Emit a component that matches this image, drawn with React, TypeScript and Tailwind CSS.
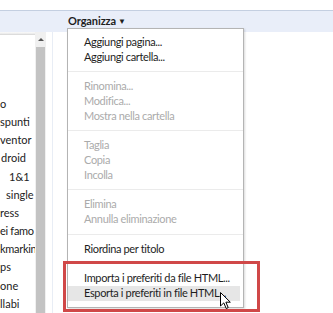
import React from 'react'

type Item = { label: string; disabled?: boolean; hover?: boolean } | 'sep'

const menu: Item[] = [
  { label: 'Aggiungi pagina...' },
  { label: 'Aggiungi cartella...' },
  'sep',
  { label: 'Rinomina...', disabled: true },
  { label: 'Modifica...', disabled: true },
  { label: 'Mostra nella cartella', disabled: true },
  'sep',
  { label: 'Taglia', disabled: true },
  { label: 'Copia', disabled: true },
  { label: 'Incolla', disabled: true },
  'sep',
  { label: 'Elimina', disabled: true },
  { label: 'Annulla eliminazione', disabled: true },
  'sep',
  { label: 'Riordina per titolo' },
  'sep',
  { label: 'Importa i preferiti da file HTML...' },
  { label: 'Esporta i preferiti in file HTML...', hover: true },
]

// visible (clipped) tails of the bookmark tree on the left
const tree: { text: string; cls: string }[] = [
  { text: 'o', cls: 'pl-0' },
  { text: 'spunti', cls: 'pl-0' },
  { text: 'ventor', cls: 'pl-0' },
  { text: 'droid', cls: 'pl-[1px]' },
  { text: '1&1', cls: 'pl-[9px]' },
  { text: 'single', cls: 'pl-[6px]' },
  { text: 'ress', cls: 'pl-0' },
  { text: 'ei famo', cls: 'pl-0 tracking-[-0.3px]' },
  { text: 'kmarkin', cls: 'pl-0 tracking-[-0.3px]' },
  { text: 'ps', cls: 'pl-0' },
  { text: 'one', cls: 'pl-0' },
  { text: 'llabi', cls: 'pl-0' },
]

function Cursor() {
  return (
    <svg width="12" height="18" viewBox="0 0 12 18" className="absolute left-[220px] top-[292px]">
      <path
        d="M0.5 0.5 L0.5 14 L3.8 10.9 L6.2 16.5 L8.2 15.6 L5.9 10.2 L10.3 10.2 Z"
        fill="#fff"
        stroke="#000"
        strokeWidth="1"
        strokeLinejoin="round"
      />
    </svg>
  )
}

export default function App() {
  return (
    <div className="relative w-[333px] h-[313px] overflow-hidden bg-white font-['Lato',_'Noto_Sans',_sans-serif] text-[#222]">
      {/* top band + toolbar */}
      <div className="h-[11px] bg-white border-b border-[#c4cfe1]" />
      <div className="h-[21px] bg-[#e9eef9] flex items-center pl-[68px] pb-[1px]">
        <span className="text-[11px] font-bold text-[#1e1e1e] tracking-[-0.1px]">Organizza</span>
        <span className="ml-[2px] text-[8px] text-[#1e1e1e]">▼</span>
      </div>

      {/* body */}
      <div className="flex h-[281px]">
        <div className="w-[35px] flex flex-col overflow-hidden">
          <div className="h-[14px] bg-gradient-to-b from-[#fbfbfb] to-[#e8e8e8] border-b border-[#dcdcdc]" />
          <div className="pt-[60px] flex flex-col text-[11px] leading-[18.2px] whitespace-nowrap">
            {tree.map((r) => (
              <div key={r.text} className={`h-[18.2px] ${r.cls}`}>
                {r.text}
              </div>
            ))}
          </div>
        </div>
        <div className="w-[11px] bg-[#f0f0f0] flex flex-col items-center">
          <div className="h-[15px] flex items-center justify-center">
            <div className="w-0 h-0 border-l-[3px] border-r-[3px] border-b-[3px] border-l-transparent border-r-transparent border-b-[#555]" />
          </div>
          <div className="flex-1 w-[9px] bg-[#c3c3c3]" />
        </div>
        <div className="w-[6px]" />
        <div className="flex-1 border-l border-[#e8edf5]" />
      </div>

      {/* dropdown menu */}
      <div className="absolute left-[67px] top-[28px] w-[177px] bg-white border border-[#b4b4b4] shadow-[1px_1px_2px_rgba(0,0,0,0.15)] pt-[6px] pb-[6px] text-[11px] tracking-[-0.35px]">
        {menu.map((it, i) =>
          it === 'sep' ? (
            <div key={i} className="h-[14.75px] flex items-center">
              <div className="w-full h-px bg-[#ebebeb]" />
            </div>
          ) : (
            <div
              key={i}
              className={`h-[14.75px] flex items-center pl-[16px] whitespace-nowrap ${
                it.hover ? 'bg-[#e6e6e6] mr-[3px]' : ''
              } ${it.disabled ? 'text-[#ababab]' : 'text-[#1e1e1e]'}`}
            >
              {it.label}
            </div>
          )
        )}
      </div>

      {/* highlight box */}
      <div className="absolute left-[63px] top-[261px] w-[197px] h-[51px] border-[3px] border-[#d04848]" />

      <Cursor />
    </div>
  )
}
